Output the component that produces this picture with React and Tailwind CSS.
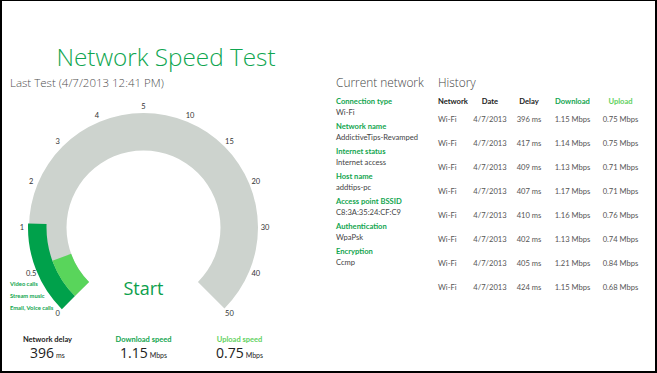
import React from "react";

const CX = 143.5;
const CY = 226.5;

function pt(theta, r) {
  const a = (theta * Math.PI) / 180;
  return [CX + r * Math.sin(a), CY - r * Math.cos(a)];
}

function sector(t1, t2, r1, r2) {
  const large = t2 - t1 > 180 ? 1 : 0;
  const [ox1, oy1] = pt(t1, r2);
  const [ox2, oy2] = pt(t2, r2);
  const [ix2, iy2] = pt(t2, r1);
  const [ix1, iy1] = pt(t1, r1);
  return `M${ox1} ${oy1} A${r2} ${r2} 0 ${large} 1 ${ox2} ${oy2} L${ix2} ${iy2} A${r1} ${r1} 0 ${large} 0 ${ix1} ${iy1} Z`;
}

const scale = ["0", "0.5", "1", "2", "3", "4", "5", "10", "15", "20", "30", "40", "50"];
const SMALL = "Lato, 'Open Sans', sans-serif";

function Gauge() {
  return (
    <svg width="328" height="225" viewBox="2 95 328 225" className="block">
      <path d={sector(-135, 135, 77, 114.5)} fill="#cdd3ce" />
      <path d={sector(-135, -88, 97, 115.5)} fill="#00a14b" />
      <path d={sector(-135, -110, 77, 97)} fill="#59d55b" />
      {scale.map((s, i) => {
        const [x, y] = pt(-135 + 22.5 * i, 121.5);
        return (
          <text
            key={s}
            x={x}
            y={y}
            textAnchor="middle"
            dominantBaseline="central"
            fontSize="7.5"
            fill="#333"
            fontFamily={SMALL}
          >
            {s}
          </text>
        );
      })}
      <text
        x={CX}
        y={287}
        textAnchor="middle"
        dominantBaseline="central"
        fontSize="18"
        fill="#0ca04c"
        fontFamily="'Open Sans', sans-serif"
      >
        Start
      </text>
      {[
        ["Video calls", 282],
        ["Stream music", 294],
        ["Email, Voice calls", 306],
      ].map(([t, y]) => (
        <text
          key={t}
          x={10}
          y={y}
          dominantBaseline="central"
          fontSize="5.8"
          fontWeight="bold"
          fill="#12a54f"
          fontFamily={SMALL}
        >
          {t}
        </text>
      ))}
    </svg>
  );
}

const netInfo = [
  ["Connection type", "Wi-Fi"],
  ["Network name", "AddictiveTips-Revamped"],
  ["Internet status", "Internet access"],
  ["Host name", "addtips-pc"],
  ["Access point BSSID", "C8:3A:35:24:CF:C9"],
  ["Authentication", "WpaPsk"],
  ["Encryption", "Ccmp"],
];

const history = [
  ["396 ms", "1.15 Mbps", "0.75 Mbps"],
  ["417 ms", "1.14 Mbps", "0.75 Mbps"],
  ["409 ms", "1.13 Mbps", "0.71 Mbps"],
  ["407 ms", "1.17 Mbps", "0.71 Mbps"],
  ["410 ms", "1.16 Mbps", "0.76 Mbps"],
  ["402 ms", "1.13 Mbps", "0.74 Mbps"],
  ["405 ms", "1.21 Mbps", "0.84 Mbps"],
  ["424 ms", "1.15 Mbps", "0.68 Mbps"],
];

function Stat({ label, value, unit, color }) {
  return (
    <div className="w-[96px] flex flex-col items-center">
      <div
        className={`h-[10px] leading-[10px] text-[7.5px] font-bold ${color}`}
        style={{ fontFamily: SMALL }}
      >
        {label}
      </div>
      <div className="h-[15px] leading-[15px] text-[#222]">
        <span className="text-[14px]">{value}</span>
        <span className="text-[7px] ml-[2px]" style={{ fontFamily: SMALL }}>
          {unit}
        </span>
      </div>
    </div>
  );
}

export default function App() {
  return (
    <div
      className="w-[657px] h-[373px] bg-white border-black border-t border-l-2 border-r-2 border-b-2 flex overflow-hidden"
      style={{ fontFamily: "'Open Sans', sans-serif" }}
    >
      <div className="w-[328px] flex flex-col">
        <div className="mt-[43px] h-[25px] leading-[25px] text-center text-[24.3px] font-light text-[#0fa650]">
          Network Speed Test
        </div>
        <div className="mt-[7px] h-[14px] leading-[14px] pl-[8px] text-[11.5px] font-light text-[#505050]">
          Last Test (4/7/2013 12:41 PM)
        </div>
        <div className="mt-[6px]">
          <Gauge />
        </div>
        <div className="flex ml-[-2.5px] mt-[14px]">
          <Stat label="Network delay" value="396" unit="ms" color="text-[#222]" />
          <Stat label="Download speed" value="1.15" unit="Mbps" color="text-[#12a54f]" />
          <Stat label="Upload speed" value="0.75" unit="Mbps" color="text-[#5fd160]" />
        </div>
      </div>

      <div className="flex pl-[6px] mt-[74px]" style={{ fontFamily: SMALL }}>
        <div className="w-[102px] flex flex-col">
          <div
            className="h-[14px] leading-[14px] text-[11.9px] font-light text-[#444]"
            style={{ fontFamily: "'Open Sans', sans-serif" }}
          >
            Current network
          </div>
          <div className="mt-[7px] flex flex-col gap-[4px]">
            {netInfo.map(([l, v]) => (
              <div key={l} className="flex flex-col">
                <div className="h-[10.5px] leading-[10.5px] text-[7.6px] font-bold text-[#12a54f]">{l}</div>
                <div className="h-[10.5px] leading-[10.5px] text-[7.6px] text-[#444]">{v}</div>
              </div>
            ))}
          </div>
        </div>
        <div className="flex flex-col">
          <div
            className="h-[14px] leading-[14px] text-[11.9px] font-light text-[#444]"
            style={{ fontFamily: "'Open Sans', sans-serif" }}
          >
            History
          </div>
          <div className="mt-[7px] flex h-[10px] leading-[10px] text-[7.6px] font-bold">
            <div className="w-[32px] text-[#222]">Network</div>
            <div className="w-[40px] text-center text-[#222]">Date</div>
            <div className="w-[38px] text-center text-[#222]">Delay</div>
            <div className="w-[49px] text-center text-[#12a54f]">Download</div>
            <div className="w-[47px] text-center text-[#5fd160]">Upload</div>
          </div>
          <div className="mt-[2px] flex flex-col">
            {history.map(([d, dl, ul], i) => (
              <div key={i} className="flex h-[24px] items-center text-[7.6px] text-[#555]">
                <div className="w-[32px]">Wi-Fi</div>
                <div className="w-[40px] text-center">4/7/2013</div>
                <div className="w-[38px] text-center">{d}</div>
                <div className="w-[49px] text-center">{dl}</div>
                <div className="w-[47px] text-center">{ul}</div>
              </div>
            ))}
          </div>
        </div>
      </div>
    </div>
  );
}
